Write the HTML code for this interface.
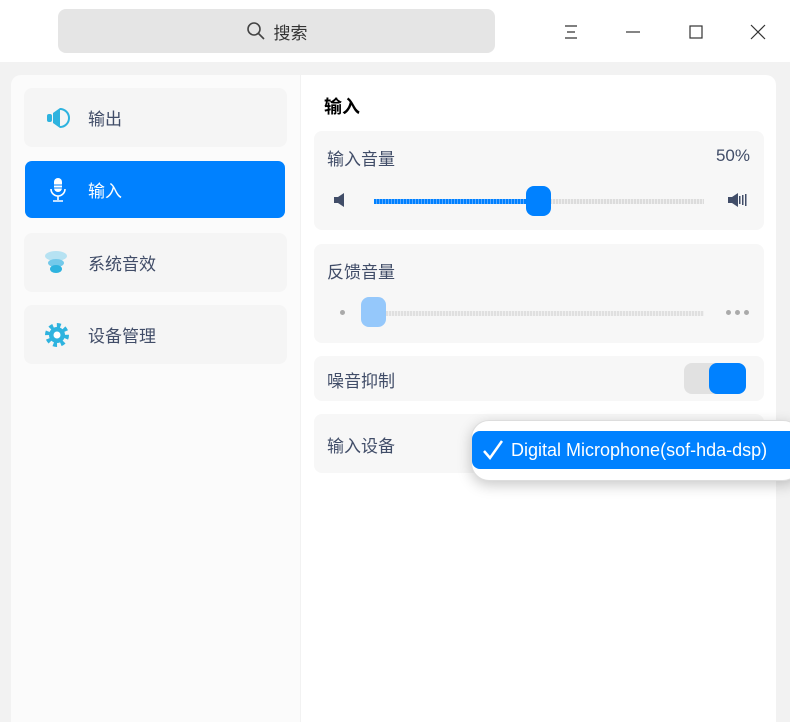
<!DOCTYPE html>
<html><head><meta charset="utf-8"><style>
*{margin:0;padding:0;box-sizing:border-box}
body{width:790px;height:722px;overflow:hidden;background:#f2f2f2;font-family:"Liberation Sans","Noto Sans CJK SC",sans-serif;color:#414d68;position:relative}
.top{position:absolute;left:0;top:0;width:790px;height:62px;background:#fff}
.search{position:absolute;left:58px;top:9px;width:437px;height:44px;background:#e5e5e5;border-radius:8px;font-size:17px;color:#333;display:flex;align-items:center;justify-content:center;gap:8px}
.left{position:absolute;left:11px;top:75px;width:289px;height:647px;background:#fbfbfb;border-radius:10px 0 0 0}
.right{position:absolute;left:301px;top:75px;width:475px;height:647px;background:#fff;border-radius:0 10px 0 0}
.item{position:absolute;left:24px;width:263px;height:59px;background:#f5f5f5;border-radius:8px;font-size:17px;display:flex;align-items:center}
.item span{position:absolute;left:64px}
.item svg{position:absolute;left:20px}
.card{position:absolute;left:314px;width:450px;background:#f7f7f7;border-radius:8px;font-size:17px}
.lbl{position:absolute;left:13px}
</style></head><body>
<div class="top"></div>
<div class="search"><svg width="20" height="20" viewBox="0 0 20 20"><circle cx="8" cy="8" r="6" fill="none" stroke="#444" stroke-width="1.6"/><line x1="12.5" y1="12.5" x2="18" y2="18" stroke="#444" stroke-width="1.6"/></svg>搜索</div>
<svg style="position:absolute;left:563px;top:24px" width="16" height="16"><path d="M2 2h12M4 8h8M2 14h12" stroke="#333" stroke-width="1.2"/></svg>
<svg style="position:absolute;left:625px;top:24px" width="16" height="16"><path d="M1 8h14" stroke="#333" stroke-width="1.2"/></svg>
<svg style="position:absolute;left:688px;top:24px" width="16" height="16"><rect x="2" y="2" width="12" height="12" fill="none" stroke="#333" stroke-width="1.2"/></svg>
<svg style="position:absolute;left:750px;top:24px" width="16" height="16"><path d="M1 1l14 14M15 1L1 15" stroke="#333" stroke-width="1.2"/></svg>
<div class="left"></div><div class="right"></div>
<div class="item" style="top:88px"><svg width="26" height="26" viewBox="0 0 26 26"><rect x="3" y="9" width="5" height="8" rx="2" fill="#2eb3df"/><path d="M9 8l7-5v20l-7-5z" fill="#2eb3df"/><path d="M16 4a9 9 0 0 1 0 18" fill="none" stroke="#2eb3df" stroke-width="2"/></svg><span>输出</span></div>
<div class="item" style="top:161px;left:25px;width:260px;height:57px;background:#0081ff;color:#fff;border-radius:7px"><svg width="26" height="26" viewBox="0 0 26 26"><rect x="9" y="1" width="8" height="14" rx="4" fill="#fff"/><path d="M6 12a7 7 0 0 0 14 0M13 19v4M8 24h10" fill="none" stroke="#fff" stroke-width="1.6"/><path d="M9 8h8M9 11h8" stroke="#0081ff"/></svg><span style="left:63px">输入</span></div>
<div class="item" style="top:233px"><svg width="26" height="26" viewBox="0 0 26 26"><ellipse cx="12" cy="6" rx="11" ry="5" fill="#b6e2f2"/><ellipse cx="12" cy="13" rx="8" ry="4" fill="#73c9ea"/><ellipse cx="12" cy="19" rx="6" ry="4" fill="#2eb3df"/></svg><span>系统音效</span></div>
<div class="item" style="top:305px"><svg width="26" height="26" viewBox="0 0 26 26"><circle cx="13" cy="13" r="9" fill="none" stroke="#2eb3df" stroke-width="6" stroke-dasharray="3.5 3.5"/><circle cx="13" cy="13" r="8" fill="#2eb3df"/><circle cx="13" cy="13" r="3.5" fill="#fff"/></svg><span>设备管理</span></div>
<div style="position:absolute;left:324px;top:93px;font-size:18px;font-weight:bold;color:#000">输入</div>
<div class="card" style="top:131px;height:99px"><div class="lbl" style="top:14px">输入音量</div><div style="position:absolute;right:14px;top:15px">50%</div>
<svg style="position:absolute;left:20px;top:62px" width="12" height="14"><path d="M0 4h4l6-4v14l-6-4H0z" fill="#414d68"/></svg>
<div style="position:absolute;left:60px;top:68px;width:165px;height:5px;background:repeating-linear-gradient(90deg,#0081ff 0 2px,#5aa9ff 2px 3px)"></div>
<div style="position:absolute;left:230px;top:68px;width:160px;height:5px;background:repeating-linear-gradient(90deg,#dcdcdc 0 2px,#eee 2px 3px)"></div>
<div style="position:absolute;left:212px;top:55px;width:25px;height:30px;background:#0081ff;border-radius:8px"></div>
<svg style="position:absolute;left:414px;top:62px" width="20" height="14"><path d="M0 4h4l6-4v14l-6-4H0z M11 3h1.5v8H11z M14 2h1.5v10H14z M17 1h1.5v12H17z" fill="#414d68"/></svg></div>
<div class="card" style="top:244px;height:99px"><div class="lbl" style="top:14px">反馈音量</div>
<div style="position:absolute;left:26px;top:66px;width:5px;height:5px;border-radius:50%;background:#aaa"></div>
<div style="position:absolute;left:60px;top:67px;width:330px;height:5px;background:repeating-linear-gradient(90deg,#e0e0e0 0 2px,#f0f0f0 2px 3px)"></div>
<div style="position:absolute;left:47px;top:53px;width:25px;height:30px;background:#95c8fb;border-radius:8px"></div>
<div style="position:absolute;left:412px;top:66px;font-size:0"><span style="display:inline-block;width:5px;height:5px;border-radius:50%;background:#aaa;margin-right:4px"></span><span style="display:inline-block;width:5px;height:5px;border-radius:50%;background:#aaa;margin-right:4px"></span><span style="display:inline-block;width:5px;height:5px;border-radius:50%;background:#aaa"></span></div></div>
<div class="card" style="top:356px;height:45px"><div class="lbl" style="top:11px">噪音抑制</div>
<div style="position:absolute;left:370px;top:7px;width:62px;height:31px;background:#e1e1e1;border-radius:8px"></div>
<div style="position:absolute;left:395px;top:7px;width:37px;height:31px;background:#0081ff;border-radius:8px"></div></div>
<div class="card" style="top:414px;height:59px"><div class="lbl" style="top:18px">输入设备</div></div>
<div style="position:absolute;left:471px;top:420px;width:330px;height:61px;background:#fff;border-radius:18px;box-shadow:0 4px 14px rgba(0,0,0,.22);border:1px solid #ddd"></div>
<div style="position:absolute;left:472px;top:431px;width:318px;height:38px;background:#0081ff;border-radius:8px 0 0 8px;color:#fff;font-size:18px;line-height:38px;padding-left:39px;white-space:nowrap">Digital Microphone(sof-hda-dsp)</div>
<svg style="position:absolute;left:482px;top:439px" width="22" height="22"><path d="M2 12l6 7L20 2" fill="none" stroke="#fff" stroke-width="2.5"/></svg>
</body></html>
